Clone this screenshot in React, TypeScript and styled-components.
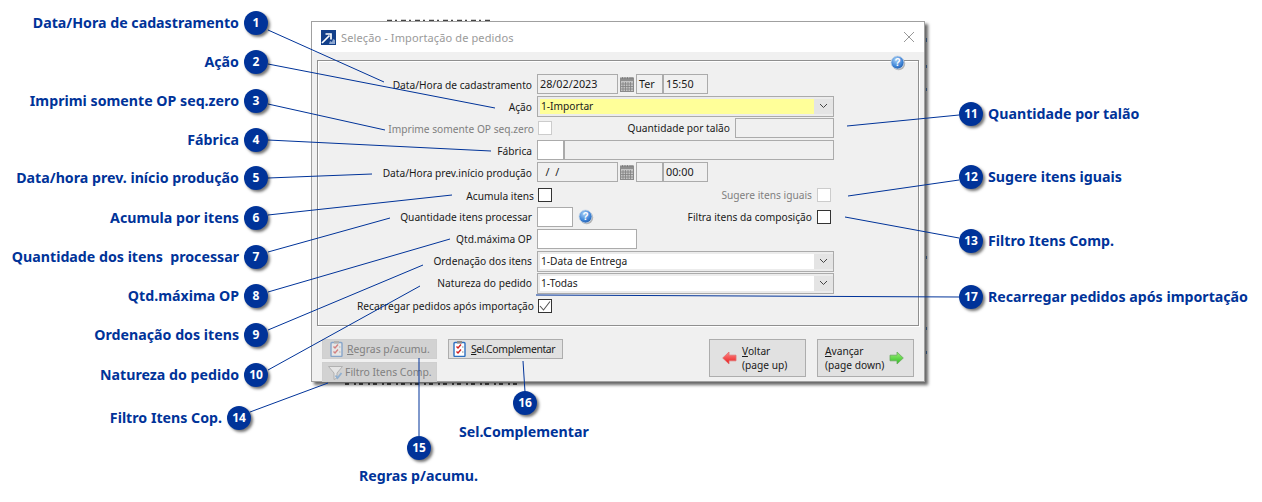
import styled, { createGlobalStyle } from 'styled-components'

const BLUE = '#003399'

const LEFT_CALLOUTS = [
  { n: 1, y: 23, text: 'Data/Hora de cadastramento' },
  { n: 2, y: 62, text: 'Ação' },
  { n: 3, y: 101, text: 'Imprimi somente OP seq.zero' },
  { n: 4, y: 140, text: 'Fábrica' },
  { n: 5, y: 178, text: 'Data/hora prev. início produção' },
  { n: 6, y: 218, text: 'Acumula por itens' },
  { n: 7, y: 257, text: 'Quantidade dos itens  processar' },
  { n: 8, y: 296, text: 'Qtd.máxima OP' },
  { n: 9, y: 335, text: 'Ordenação dos itens' },
  { n: 10, y: 375, text: 'Natureza do pedido' },
]

const RIGHT_CALLOUTS = [
  { n: 11, y: 114, text: 'Quantidade por talão' },
  { n: 12, y: 177, text: 'Sugere itens iguais' },
  { n: 13, y: 241, text: 'Filtro Itens Comp.' },
  { n: 17, y: 297, text: 'Recarregar pedidos após importação' },
]

const LINES = [
  [268, 30, 384, 82],
  [268, 64, 495, 108],
  [268, 104, 385, 130],
  [268, 140, 491, 151],
  [268, 178, 372, 174],
  [268, 215, 452, 195],
  [268, 252, 390, 218],
  [268, 292, 450, 239],
  [268, 330, 423, 265],
  [268, 370, 420, 286],
  [959, 115, 847, 126],
  [959, 180, 848, 196],
  [959, 238, 845, 217],
  [959, 297, 536, 295],
  [250, 412, 328, 383],
  [419, 436, 419, 358],
  [525, 392, 523, 361],
]

const GlobalStyle = createGlobalStyle`
  html, body { margin: 0; padding: 0; background: #fff; }
  body { font-family: "Noto Sans", "Liberation Sans", sans-serif; }
`

// ── Canvas ───────────────────────────────────────────────────────────────────

const Canvas = styled.div`
  position: relative;
  width: 1262px;
  height: 502px;
  overflow: hidden;
  background: #fff;
`

const BehindLayer = styled.svg`
  position: absolute;
  inset: 0;
  z-index: 0;
`

const LineLayer = styled.svg`
  position: absolute;
  inset: 0;
  z-index: 2;
  pointer-events: none;
`

const Badge = styled.div<{ $x: number; $y: number }>`
  position: absolute;
  z-index: 3;
  left: ${({ $x }) => $x - 12}px;
  top: ${({ $y }) => $y - 12}px;
  width: 24px;
  height: 24px;
  border-radius: 50%;
  background: ${BLUE};
  color: #fff;
  font-size: 12px;
  font-weight: 700;
  line-height: 24px;
  text-align: center;
  box-shadow: 2px 2px 3px rgba(0, 0, 0, 0.55);
`

const CalloutText = styled.div<{ $x: number; $y: number; $right?: boolean }>`
  position: absolute;
  z-index: 3;
  top: ${({ $y }) => $y - 11}px;
  ${({ $x, $right }) => ($right ? `right: ${1262 - $x}px;` : `left: ${$x}px;`)}
  color: ${BLUE};
  font-size: 14.2px;
  font-weight: 700;
  line-height: 22px;
  white-space: pre;
`

// ── Dialog ───────────────────────────────────────────────────────────────────

const Dialog = styled.div`
  position: absolute;
  z-index: 1;
  left: 311px;
  top: 21px;
  width: 614px;
  height: 361px;
  box-sizing: border-box;
  display: flex;
  flex-direction: column;
  background: #f0f0f0;
  border: 1px solid #a0a0a0;
  box-shadow: 3px 3px 3px rgba(0, 0, 0, 0.6);
  color: #1a1a1a;
  font-size: 10.2px;
`

const TitleBar = styled.div`
  flex: none;
  height: 30px;
  display: flex;
  align-items: center;
  gap: 5px;
  padding: 0 9px;
  background: #fff;
`

const Title = styled.span`
  flex: 1;
  color: #9a9a9a;
  font-size: 11px;
  letter-spacing: 0.12px;
`

const Body = styled.div`
  flex: 1;
  display: flex;
  flex-direction: column;
  padding: 8px 5px 0 5px;
`

const GroupBox = styled.div`
  position: relative;
  flex: none;
  height: 266px;
  box-sizing: border-box;
  padding-top: 12px;
  border: 1px solid #8f8f8f;
  box-shadow: 1px 1px 0 #fff, inset 1px 1px 0 #fff;
`

const GroupHelp = styled.div`
  position: absolute;
  right: 12px;
  top: -6px;
  display: flex;
`

const Row = styled.div<{ $h?: number }>`
  height: ${({ $h }) => $h ?? 22}px;
  display: flex;
  align-items: center;
`

const Label = styled.div<{ $disabled?: boolean; $pad?: number; $low?: boolean }>`
  flex: none;
  width: 219px;
  box-sizing: border-box;
  padding-right: ${({ $pad }) => $pad ?? 5}px;
  padding-top: ${({ $low }) => ($low ? 2 : 0)}px;
  text-align: right;
  white-space: nowrap;
  color: ${({ $disabled }) => ($disabled ? '#808080' : '#1a1a1a')};
`

const Fields = styled.div`
  width: 297px;
  display: flex;
  align-items: center;
`

const Field = styled.div<{ $w?: number; $white?: boolean; $grow?: boolean }>`
  ${({ $w }) => ($w ? `width: ${$w}px;` : '')}
  ${({ $grow }) => ($grow ? 'flex: 1;' : 'flex: none;')}
  height: 20px;
  box-sizing: border-box;
  padding-left: 2px;
  border: 1px solid #ababab;
  background: ${({ $white }) => ($white ? '#fff' : '#f0f0f0')};
  font-size: 10.8px;
  line-height: 17px;
  white-space: pre;
`

const Select = styled.div<{ $yellow?: boolean }>`
  flex: 1;
  height: 21px;
  box-sizing: border-box;
  display: flex;
  border: 1px solid #ababab;
  padding: 2px 0 2px 2px;
  background: #ececec;
  line-height: 15px;

  span {
    flex: 1;
    padding-left: 1px;
    background: ${({ $yellow }) => ($yellow ? '#ffff99' : '#fff')};
  }
`

const Chevron = styled.div`
  flex: none;
  width: 19px;
  display: flex;
  align-items: center;
  justify-content: center;
  background: #e4e4e4;
`

const Check = styled.div<{ $disabled?: boolean }>`
  flex: none;
  width: 14px;
  height: 14px;
  box-sizing: border-box;
  display: flex;
  align-items: center;
  justify-content: center;
  background: #fff;
  border: 1px solid ${({ $disabled }) => ($disabled ? '#cccccc' : '#333')};
  margin-left: 1px;
`

const SideLabel = styled.div<{ $disabled?: boolean; $pad?: number }>`
  flex: 1;
  padding-right: ${({ $pad }) => $pad ?? 4}px;
  text-align: right;
  white-space: nowrap;
  color: ${({ $disabled }) => ($disabled ? '#808080' : '#1a1a1a')};
`

const RightGap = styled.div`
  flex: none;
  width: 3px;
`

const CalendarSlot = styled.div`
  flex: none;
  width: 18px;
  display: flex;
  justify-content: center;
`

const InlineHelp = styled.div`
  flex: none;
  display: flex;
  margin-left: 5px;
`

const Footer = styled.div`
  flex: 1;
  display: flex;
  padding: 13px 5px 0 5px;
  gap: 11px;
`

const FooterColumn = styled.div`
  display: flex;
  flex-direction: column;
  gap: 3px;
`

const Button = styled.div<{ $disabled?: boolean; $pad: number; $gap: number; $tight?: boolean }>`
  width: 115px;
  height: 20px;
  box-sizing: border-box;
  display: flex;
  align-items: center;
  gap: ${({ $gap }) => $gap}px;
  padding-left: ${({ $pad }) => $pad}px;
  background: ${({ $disabled }) => ($disabled ? '#d2d2d2' : '#e1e1e1')};
  border: 1px solid ${({ $disabled }) => ($disabled ? '#cfcfcf' : '#adadad')};
  color: ${({ $disabled }) => ($disabled ? '#808080' : '#1a1a1a')};
  font-size: 10.4px;
  letter-spacing: ${({ $tight }) => ($tight ? '-0.35px' : '0')};
  white-space: nowrap;

  svg { flex: none; }
  u { text-underline-offset: 1px; }
`

const NavGroup = styled.div`
  margin-left: auto;
  display: flex;
  gap: 11px;
`

const NavButton = styled.div<{ $pad: number }>`
  width: 97px;
  height: 38px;
  box-sizing: border-box;
  display: flex;
  align-items: center;
  gap: 5px;
  padding-left: ${({ $pad }) => $pad}px;
  background: #e1e1e1;
  border: 1px solid #adadad;
  line-height: 14px;

  svg { flex: none; }
`

// ── Icons ────────────────────────────────────────────────────────────────────

const HelpIcon = () => (
  <svg width="16" height="16" viewBox="0 0 16 16">
    <defs>
      <radialGradient id="helpFill" cx="0.4" cy="0.3" r="0.8">
        <stop offset="0" stopColor="#a8cdf5" />
        <stop offset="0.6" stopColor="#3f86d8" />
        <stop offset="1" stopColor="#1d4f9c" />
      </radialGradient>
    </defs>
    <circle cx="8.6" cy="8.6" r="6.6" fill="#8a8a8a" opacity="0.6" />
    <circle cx="7.5" cy="7.5" r="6.5" fill="url(#helpFill)" stroke="#c4d4e6" strokeWidth="0.8" />
    <text x="7.5" y="11" textAnchor="middle" fontSize="10" fontWeight="700" fill="#fff" fontFamily="Liberation Sans">?</text>
  </svg>
)

const CalendarIcon = () => (
  <svg width="14" height="15" viewBox="0 0 14 15">
    <rect x="0.5" y="1" width="13" height="13.5" fill="#c4c4c4" stroke="#8a8a8a" />
    <rect x="0.5" y="1" width="13" height="3" fill="#8f8f8f" />
    <path d="M3 5v9M5.5 5v9M8 5v9M10.5 5v9M1 7h12M1 9.5h12M1 12h12" stroke="#808080" strokeWidth="0.8" />
    <path d="M2.5 0v2M5 0v2M7.5 0v2M10 0v2M12 0v2" stroke="#777" strokeWidth="0.8" />
  </svg>
)

const ChevronIcon = () => (
  <svg width="9" height="6" viewBox="0 0 9 6">
    <path d="M1 1l3.5 3.5L8 1" fill="none" stroke="#444" strokeWidth="1" />
  </svg>
)

const CheckMark = () => (
  <svg width="12" height="12" viewBox="0 0 12 12">
    <path d="M1 6l3.5 4L11 1.5" fill="none" stroke="#555" strokeWidth="1.1" />
  </svg>
)

const AppIcon = () => (
  <svg width="15" height="15" viewBox="0 0 15 15">
    <rect width="15" height="15" fill="#123f8a" />
    <path d="M1 13L8.5 5.5M4.5 4H10V9.5" fill="none" stroke="#fff" strokeWidth="1.7" />
    <path d="M8 14l1-3 2 1 1-3 2 1v4z" fill="#8fa8d0" />
  </svg>
)

const ChecklistIcon = ({ faded }: { faded?: boolean }) => (
  <svg width="13" height="16" viewBox="0 0 13 16" opacity={faded ? 0.45 : 1}>
    <rect x="1" y="1.5" width="11" height="14" rx="1" fill="#fff" stroke="#2d6fc0" strokeWidth="1.4" />
    <rect x="4" y="0" width="5" height="2.5" fill="#8a8a8a" />
    <path d="M3.5 5.5l1.5 1.5 3-3.5M3.5 10.5l1.5 1.5 3-3.5" fill="none" stroke="#d42020" strokeWidth="1.4" />
    <path d="M9 6h1.5M9 11h1.5" stroke="#888" strokeWidth="1" />
  </svg>
)

const FunnelIcon = () => (
  <svg width="15" height="15" viewBox="0 0 15 15" opacity="0.65">
    <path d="M0.5 1.5h14L9 8v5l-3 1.5V8z" fill="#f0f0f0" stroke="#a0a0a0" />
    <path d="M7.5 10.5l2 2.5 4-5" fill="none" stroke="#6f9fd0" strokeWidth="1.8" />
  </svg>
)

const ArrowIcon = ({ dir, from, to, stroke }: { dir: 'left' | 'right'; from: string; to: string; stroke: string }) => (
  <svg width="15" height="14" viewBox="0 0 15 14">
    <defs>
      <linearGradient id={`arrow-${dir}`} x1="0" y1="0" x2="0" y2="1">
        <stop offset="0" stopColor={from} />
        <stop offset="1" stopColor={to} />
      </linearGradient>
    </defs>
    <path
      d={dir === 'left' ? 'M0.7 7L7 1V4.2H14V9.8H7V13Z' : 'M14.3 7L8 1V4.2H1V9.8H8V13Z'}
      fill={`url(#arrow-${dir})`}
      stroke={stroke}
      strokeWidth="0.8"
    />
  </svg>
)

export default function App() {
  return (
    <Canvas>
      <GlobalStyle />

      {/* bits of the window behind the dialog */}
      <BehindLayer width="1262" height="502" viewBox="0 0 1262 502">
        <path d="M387 20.5H491" stroke="#444" strokeWidth="1.5" strokeDasharray="5 3 2 4" />
        <path d="M345 384H520" stroke="#555" strokeWidth="2" strokeDasharray="4 5 2 3" />
        <path d="M926.5 38v4M926.5 65v3M926.5 88v3M926.5 256v3M926.5 327v3M926.5 351v3" stroke="#5b8fd0" strokeWidth="1" />
      </BehindLayer>

      <Dialog>
        <TitleBar>
          <AppIcon />
          <Title>Seleção - Importação de pedidos</Title>
          <svg width="12" height="12" viewBox="0 0 12 12">
            <path d="M1 1l10 10M11 1L1 11" stroke="#8c8c8c" strokeWidth="0.9" />
          </svg>
        </TitleBar>

        <Body>
          <GroupBox>
            <GroupHelp><HelpIcon /></GroupHelp>

            <Row>
              <Label $low>Data/Hora de cadastramento</Label>
              <Fields>
                <Field $w={81}>28/02/2023</Field>
                <CalendarSlot><CalendarIcon /></CalendarSlot>
                <Field $w={27}>Ter</Field>
                <Field $w={45}>15:50</Field>
              </Fields>
            </Row>
            <Row>
              <Label $low>Ação</Label>
              <Fields>
                <Select $yellow>
                  <span>1-Importar</span>
                  <Chevron><ChevronIcon /></Chevron>
                </Select>
              </Fields>
            </Row>
            <Row>
              <Label $disabled $pad={3} $low>Imprime somente OP seq.zero</Label>
              <Fields>
                <Check $disabled />
                <SideLabel $pad={5}>Quantidade por talão</SideLabel>
                <Field $w={99} />
              </Fields>
            </Row>
            <Row>
              <Label $low>Fábrica</Label>
              <Fields>
                <Field $w={27} $white />
                <Field $grow />
              </Fields>
            </Row>
            <Row>
              <Label $low>Data/Hora prev.início produção</Label>
              <Fields>
                <Field $w={81}>{'\u00a0\u00a0/\u00a0\u00a0/'}</Field>
                <CalendarSlot><CalendarIcon /></CalendarSlot>
                <Field $w={27} />
                <Field $w={45}>00:00</Field>
              </Fields>
            </Row>
            <Row $h={23}>
              <Label $pad={3} $low>Acumula itens</Label>
              <Fields>
                <Check />
                <SideLabel $disabled>Sugere itens iguais</SideLabel>
                <Check $disabled />
                <RightGap />
              </Fields>
            </Row>
            <Row>
              <Label>Quantidade itens processar</Label>
              <Fields>
                <Field $w={36} $white />
                <InlineHelp><HelpIcon /></InlineHelp>
                <SideLabel>Filtra itens da composição</SideLabel>
                <Check />
                <RightGap />
              </Fields>
            </Row>
            <Row>
              <Label>Qtd.máxima OP</Label>
              <Fields>
                <Field $w={100} $white />
              </Fields>
            </Row>
            <Row>
              <Label>Ordenação dos itens</Label>
              <Fields>
                <Select>
                  <span>1-Data de Entrega</span>
                  <Chevron><ChevronIcon /></Chevron>
                </Select>
              </Fields>
            </Row>
            <Row>
              <Label>Natureza do pedido</Label>
              <Fields>
                <Select>
                  <span>1-Todas</span>
                  <Chevron><ChevronIcon /></Chevron>
                </Select>
              </Fields>
            </Row>
            <Row $h={24}>
              <Label $pad={3}>Recarregar pedidos após importação</Label>
              <Fields>
                <Check><CheckMark /></Check>
              </Fields>
            </Row>
          </GroupBox>

          <Footer>
            <FooterColumn>
              <Button $disabled $pad={7} $gap={4}><ChecklistIcon faded /><span><u>R</u>egras p/acumu.</span></Button>
              <Button $disabled $pad={5} $gap={2}><FunnelIcon /><span>Filtro Itens Comp.</span></Button>
            </FooterColumn>
            <Button $pad={4} $gap={5} $tight><ChecklistIcon /><span><u>S</u>el.Complementar</span></Button>
            <NavGroup>
              <NavButton $pad={12}>
                <ArrowIcon dir="left" from="#ff8a8a" to="#e81818" stroke="#e07070" />
                <span><u>V</u>oltar<br />(page up)</span>
              </NavButton>
              <NavButton $pad={7}>
                <span><u>A</u>vançar<br />(page down)</span>
                <ArrowIcon dir="right" from="#a0f07a" to="#2cbf20" stroke="#6aa860" />
              </NavButton>
            </NavGroup>
          </Footer>
        </Body>
      </Dialog>

      <LineLayer width="1262" height="502" viewBox="0 0 1262 502">
        {LINES.map(([x1, y1, x2, y2], i) => (
          <line key={i} x1={x1} y1={y1} x2={x2} y2={y2} stroke={BLUE} strokeWidth="1" />
        ))}
      </LineLayer>

      {LEFT_CALLOUTS.map(c => (
        <div key={c.n}>
          <CalloutText $x={239} $y={c.y} $right>{c.text}</CalloutText>
          <Badge $x={256} $y={c.y}>{c.n}</Badge>
        </div>
      ))}
      {RIGHT_CALLOUTS.map(c => (
        <div key={c.n}>
          <Badge $x={971} $y={c.y}>{c.n}</Badge>
          <CalloutText $x={988} $y={c.y}>{c.text}</CalloutText>
        </div>
      ))}

      <CalloutText $x={222} $y={418} $right>Filtro Itens Cop.</CalloutText>
      <Badge $x={239} $y={418}>14</Badge>
      <Badge $x={419} $y={448}>15</Badge>
      <CalloutText $x={359} $y={476}>Regras p/acumu.</CalloutText>
      <Badge $x={525} $y={403}>16</Badge>
      <CalloutText $x={459} $y={432}>Sel.Complementar</CalloutText>
    </Canvas>
  )
}
